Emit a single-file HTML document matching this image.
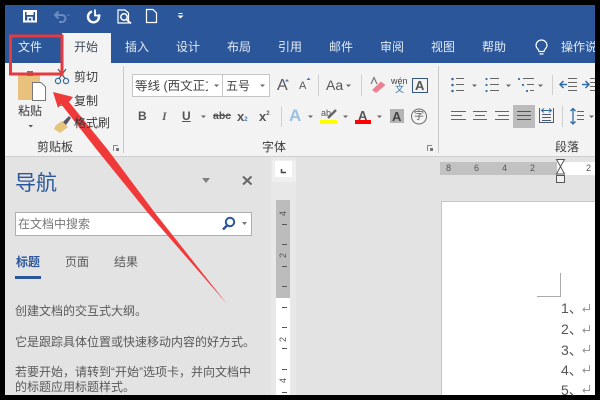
<!DOCTYPE html>
<html><head><meta charset="utf-8"><style>
html,body{margin:0;padding:0;background:#000}
#p{position:relative;width:600px;height:400px;overflow:hidden;background:#000;font-family:"Liberation Sans","Noto Sans CJK SC",sans-serif}
#p div,#p span.t{position:absolute;white-space:nowrap}
.t{line-height:1;color:#444}
.w{color:#e4ebf5;font-size:12px}
.k{color:#3a3a3a;font-size:12px}
.g{color:#5a5a5a;font-size:12px}
</style></head><body><div id="p">
<div style="left:5px;top:5px;width:590px;height:390px;background:#e3e3e3"></div>
<div style="left:271px;top:157px;width:25px;height:238px;background:#e8e8e8"></div>
<div style="left:5px;top:5px;width:590px;height:58px;background:#2b579a"></div>
<div style="left:5px;top:63px;width:590px;height:93px;background:#f3f3f3"></div>
<div style="left:5px;top:156px;width:590px;height:1px;background:#cfcfcf"></div>
<div style="left:62px;top:33px;width:49px;height:30px;background:#f3f3f3"></div>

<svg style="position:absolute;left:0;top:0" width="600" height="400">
<!-- quick access -->
<g fill="none" stroke="#fff">
<path d="M24 11H36V21.500H24Z" stroke-width="2"/><path d="M27 11H33V14.500H27Z" fill="#fff" stroke-width="1"/><path d="M28 21V17.500H32V21" stroke-width="1.500"/>
<path d="M56 15H62A3.500 3.500 0 0 1 62 22H59M58.500 11.500L55 15L58.500 18.500" stroke="#6a8cc0" stroke-width="2"/>
<path d="M67 15H70" stroke="#5f80b5"/>
<path d="M92 11.500A5.500 5.500 0 1 0 98.500 14.500" stroke-width="2.400"/><path d="M95 9.500V15.500H100.500" stroke-width="1.800"/>
<path d="M118 10H125L128.500 13V23H118Z" stroke-width="1.200"/><circle cx="124" cy="17" r="3.200" stroke-width="1.500"/><path d="M126.500 19.500L131 23.500" stroke-width="1.800"/>
<path d="M146.500 9.500H153L156.500 13V22.500H146.500Z" stroke-width="1.200"/>
<path d="M178.500 13.500H182.500" stroke-width="1"/>
</g>
<path d="M177.500 15.500H183.500L180.500 18.500Z" fill="#fff"/>
<g fill="none" stroke="#fff" stroke-width="1.200"><path d="M539 51.500C539 49 536 48.500 536 45.500A5.500 5.500 0 0 1 547 45.500C547 48.500 544 49 544 51.500ZM539.500 54H543.500"/></g>

<!-- clipboard group -->
<rect x="18" y="74" width="22" height="26" fill="#e8c27d"/><rect x="27" y="71" width="6" height="5" fill="#777"/>
<path d="M32.500 82.500H41L45.500 87V100.500H32.500Z" fill="#fff" stroke="#777"/>
<path d="M28.500 125H33L30.700 127.500Z" fill="#555"/>
<g fill="none" stroke="#2f6ea5" stroke-width="1.200"><circle cx="58" cy="81" r="2.600"/><circle cx="66" cy="81" r="2.600"/></g>
<path d="M59 78.500L66 69M65 78.500L58 69" stroke="#555" stroke-width="1.200"/>
<rect x="60.500" y="96.500" width="8" height="9" fill="#fff" stroke="#777"/>
<path d="M56 125L62 121 68 127 60 133 54 129Z" fill="#e5c47d"/><path d="M63 122L69 116 71 118 66 125Z" fill="#556"/>
<path d="M123.500 66V153M438.500 66V153" stroke="#c8c8c8"/>
<path d="M113.500 151V145.500H118M427.500 151V145.500H432" stroke="#888" fill="none"/><path d="M116 148H119V151H116ZM430 148H433V151H430Z" fill="#777"/>

<!-- font group -->
<rect x="132.500" y="74.500" width="90" height="22" fill="#fff" stroke="#c6c6c6"/>
<rect x="222.500" y="74.500" width="47" height="22" fill="#fff" stroke="#c6c6c6"/>
<path d="M214 84.500H219L216.500 87ZM260 84.500H265L262.500 87ZM346 84.500H351L348.500 87ZM472 84.500H477L474.500 87ZM506 84.500H511L508.500 87ZM538 84.500H543L540.500 87ZM201 115.500H206L203.500 118ZM308 115.500H313L310.500 118ZM343 115.500H348L345.500 118ZM377 115.500H382L379.500 118ZM589 115.500H594L591.500 118Z" fill="#666"/>
<path d="M285 81.500L287 79 289 81.500ZM306.500 80L308.500 77.500 310.500 80Z" fill="#4a78b0"/>
<path d="M281.500 107V127M318.500 75V96M361.500 75V96M552.500 75V95M562.500 106V127" stroke="#d0d0d0"/>
<path d="M222.500 0" />
<rect x="412.500" y="78.500" width="15" height="14" fill="none" stroke="#34557f"/>
<path d="M372 90L381 81.500 385.500 85 376 93Z" fill="#ee7f90"/><path d="M371 84L374 77.500 377 84" stroke="#777" stroke-width="1.200" fill="none"/>
<rect x="320" y="120" width="17" height="4" fill="#ff0"/><rect x="355" y="120" width="16" height="4" fill="#f00"/>
<path d="M328 118L336 110" stroke="#666" stroke-width="2.500"/>
<rect x="390" y="109" width="14" height="14" fill="#b4b4b4"/>
<circle cx="419" cy="116.500" r="7.500" fill="none" stroke="#666"/>

<!-- paragraph group row 1 -->
<g fill="#3a6ea5"><circle cx="452.500" cy="79" r="1.300"/><circle cx="452.500" cy="85" r="1.300"/><circle cx="452.500" cy="91" r="1.300"/><circle cx="486.500" cy="79" r="1.100"/><circle cx="486.500" cy="85" r="1.100"/><circle cx="486.500" cy="91" r="1.100"/><circle cx="519" cy="79" r="1.100"/><circle cx="523" cy="85" r="1.100"/><circle cx="527" cy="91" r="1.100"/></g>
<g stroke="#666" fill="none">
<path d="M456 78.500H464M456 84.500H464M456 90.500H464"/>
<path d="M490 78.500H499M490 84.500H499M490 90.500H499"/>
<path d="M523 78.500H534M527 84.500H534M530 90.500H534"/>
<path d="M568 78.500H577M568 82.500H577M568 86.500H577M568 90.500H577"/>
<path d="M590 78.500H595M590 82.500H595M590 86.500H595M590 90.500H595"/>
</g>
<path d="M560 84.500H567M563.500 81L560 84.500 563.500 88" stroke="#2f6ea5" stroke-width="1.500" fill="none"/>
<path d="M582 84.500H589M585.500 81L589 84.500 585.500 88" stroke="#2f6ea5" stroke-width="1.500" fill="none"/>
<!-- row 2 -->
<rect x="513" y="105" width="22" height="23" fill="#bcbcbc"/>
<g stroke="#666" fill="none">
<path d="M451 111.500H466M451 115.500H462M451 119.500H466"/>
<path d="M473 111.500H487M475 115.500H485M473 119.500H487"/>
<path d="M495 111.500H509M498 115.500H509M495 119.500H509"/>
<path d="M517 111.500H531M517 115.500H531M517 119.500H531" stroke="#555"/>
<path d="M539.500 108V122.500H553.500V108M542 114.500H551M542 117.500H551M542 120.500H551" stroke="#4a5a70"/>
<path d="M542 110.500H551M544 108.500L541.500 110.500 544 112.500M549 108.500L551.500 110.500 549 112.500" stroke="#2f6ea5"/>
<path d="M577 111.500H584M577 115.500H584M577 119.500H584"/>
</g>
<path d="M573 108.500V124M570.500 111L573 108.500 575.500 111M570.500 121.500L573 124 575.500 121.500" stroke="#2f6ea5" stroke-width="1.300" fill="none"/>

<!-- nav pane -->
<path d="M202 178H210L206 183Z" fill="#808080"/>
<path d="M243 176.500L251.500 184.500M251.500 176.500L243 184.500" stroke="#666" stroke-width="2"/>
<rect x="15.500" y="212.500" width="236" height="23" fill="#fff" stroke="#aeaeae"/>
<circle cx="230" cy="222" r="4.200" fill="none" stroke="#2b579a" stroke-width="2"/><path d="M227 225.500L223 229.500" stroke="#2b579a" stroke-width="2.500"/>
<path d="M242 222H247L244.500 225Z" fill="#777"/>
<rect x="15" y="276" width="26" height="3" fill="#2b579a"/>

<!-- rulers -->
<rect x="272" y="160" width="24" height="22" fill="#efefef"/>
<rect x="275" y="161" width="17" height="16" fill="#fff"/>
<path d="M281.500 169V172.500H286" stroke="#444" stroke-width="1.500" fill="none"/>
<rect x="276" y="200" width="14" height="198" fill="#fff"/>
<rect x="276" y="200" width="14" height="98" fill="#bcbcbc"/>
<path d="M282 224.500H287M282 244.500H287M282 266.500H287M282 286.500H287M282 307.500H287M282 327.500H287M282 348.500H287M282 369.500H287M282 392.500H287" stroke="#555" stroke-width="1"/>

<rect x="440" y="162" width="155" height="13" fill="#fff"/>
<rect x="440" y="162" width="117" height="13" fill="#c2c2c2"/>
<path d="M556.500 159.500H564.500L560.500 166.500 564.500 174H556.500L560.500 166.500Z" fill="#fff" stroke="#555"/>
<rect x="556.500" y="175.500" width="8" height="7" fill="#f1f1f1" stroke="#555"/>
<rect x="441.500" y="201.500" width="160" height="200" fill="#fff" stroke="#c6c6c6"/>
<path d="M560.500 273V296.500H537" fill="none" stroke="#aaa"/>
<g fill="none" stroke="#999"><path d="M589.500 304V309.500H583M585 307.500L583 309.500 585 311.500"/><path d="M589.500 325V330.500H583M585 328.500L583 330.500 585 332.500"/><path d="M589.500 345V350.500H583M585 348.500L583 350.500 585 352.500"/><path d="M589.500 365V370.500H583M585 368.500L583 370.500 585 372.500"/><path d="M589.500 385V390.500H583M585 388.500L583 390.500 585 392.500"/></g>

<!-- annotation -->
<path d="M53 92L73 97 69 102 108 150 155 213 227 304 148 213 97 150 61 104 58 108Z" fill="#f03a3a"/>
<rect x="10.500" y="36" width="51.500" height="38" fill="none" stroke="#e63a3f" stroke-width="3"/>
<rect x="0" y="0" width="600" height="5" fill="#000"/>
<rect x="0" y="395" width="600" height="5" fill="#000"/>
<rect x="0" y="0" width="5" height="400" fill="#000"/>
<rect x="595" y="0" width="5" height="400" fill="#000"/>
</svg>

<span class="t w" style="left:18px;top:41px">文件</span>
<span class="t" style="left:74px;top:41px;font-size:12px;color:#3f4a5c">开始</span>
<span class="t w" style="left:125px;top:41px">插入</span>
<span class="t w" style="left:176px;top:41px">设计</span>
<span class="t w" style="left:227px;top:41px">布局</span>
<span class="t w" style="left:278px;top:41px">引用</span>
<span class="t w" style="left:329px;top:41px">邮件</span>
<span class="t w" style="left:380px;top:41px">审阅</span>
<span class="t w" style="left:431px;top:41px">视图</span>
<span class="t w" style="left:482px;top:41px">帮助</span>
<span class="t w" style="left:561px;top:41px;width:34px;overflow:hidden">操作说</span>

<span class="t k" style="left:18px;top:105px">粘贴</span>
<span class="t k" style="left:74px;top:71px">剪切</span>
<span class="t k" style="left:74px;top:95px">复制</span>
<span class="t k" style="left:74px;top:117px">格式刷</span>
<span class="t k" style="left:37px;top:141px">剪贴板</span>
<span class="t k" style="left:262px;top:141px">字体</span>
<span class="t k" style="left:555px;top:141px">段落</span>

<span class="t" style="left:135px;top:80px;width:73px;overflow:hidden;font-size:12.500px;color:#444">等线 (西文正文</span>
<span class="t" style="left:226px;top:80px;font-size:12px;color:#444">五号</span>
<span class="t" style="left:277px;top:78px;font-size:16px;color:#555">A</span>
<span class="t" style="left:299px;top:81px;font-size:11px;color:#555">A</span>
<span class="t" style="left:326px;top:78px;font-size:14px;color:#555">Aa</span>
<span class="t" style="left:391px;top:77px;font-size:9px;color:#444">wén</span>
<span class="t" style="left:395px;top:85px;font-size:9px;color:#2f6ea5">文</span>
<span class="t" style="left:415px;top:79px;font-size:13px;font-weight:bold;color:#555">A</span>
<span class="t" style="left:138px;top:110px;font-size:12px;font-weight:bold;color:#555">B</span>
<span class="t" style="left:162px;top:110px;font-size:12px;font-style:italic;font-family:'Liberation Serif',serif;font-weight:bold;color:#666">I</span>
<span class="t" style="left:182px;top:110px;font-size:12px;font-weight:bold;color:#555;text-decoration:underline">U</span>
<span class="t" style="left:213px;top:111px;font-size:10.500px;font-weight:bold;color:#555;text-decoration:line-through">abc</span>
<span class="t" style="left:237px;top:110px;font-size:13px;font-weight:bold;color:#555">x<span style="font-size:6px;color:#4a78b0">2</span></span>
<span class="t" style="left:259px;top:110px;font-size:13px;font-weight:bold;color:#555">x<span style="font-size:6px;position:relative;top:-6px">2</span></span>
<span class="t" style="left:289px;top:107px;font-size:17px;font-weight:bold;color:#9cc0e4">A</span>
<span class="t" style="left:321px;top:109px;font-size:9px;color:#555">ab</span>
<span class="t" style="left:358px;top:109px;font-size:13px;font-weight:bold;color:#555">A</span>
<span class="t" style="left:392px;top:110px;font-size:13px;font-weight:bold;color:#444">A</span>
<span class="t" style="left:414px;top:112px;font-size:10px;color:#555">字</span>

<span class="t" style="left:15px;top:173px;font-size:21px;color:#2b579a">导航</span>
<span class="t" style="left:18px;top:218px;font-size:12px;color:#777">在文档中搜索</span>
<span class="t" style="left:16px;top:256px;font-size:12px;font-weight:bold;color:#2b579a">标题</span>
<span class="t g" style="left:65px;top:256px">页面</span>
<span class="t g" style="left:114px;top:256px">结果</span>
<span class="t g" style="left:15px;top:305px">创建文档的交互式大纲。</span>
<span class="t g" style="left:15px;top:336px">它是跟踪具体位置或快速移动内容的好方式。</span>
<span class="t g" style="left:15px;top:366px">若要开始，请转到“开始”选项卡，并向文档中</span>
<span class="t g" style="left:15px;top:381px">的标题应用标题样式。</span>

<span class="t" style="left:281px;top:209px;font-size:9px;color:#555;transform:rotate(-90deg)">4</span>
<span class="t" style="left:281px;top:251px;font-size:9px;color:#555;transform:rotate(-90deg)">2</span>
<span class="t" style="left:281px;top:335px;font-size:9px;color:#555;transform:rotate(-90deg)">2</span>
<span class="t" style="left:281px;top:376px;font-size:9px;color:#555;transform:rotate(-90deg)">4</span>
<span class="t" style="left:446px;top:164px;font-size:9px;color:#555">8</span>
<span class="t" style="left:474px;top:164px;font-size:9px;color:#555">6</span>
<span class="t" style="left:502px;top:164px;font-size:9px;color:#555">4</span>
<span class="t" style="left:530px;top:164px;font-size:9px;color:#555">2</span>
<span class="t" style="left:586px;top:164px;font-size:9px;color:#555">2</span>
<span class="t" style="left:561px;top:301px;font-size:14px;color:#555">1、</span>
<span class="t" style="left:561px;top:322px;font-size:14px;color:#555">2、</span>
<span class="t" style="left:561px;top:343px;font-size:14px;color:#555">3、</span>
<span class="t" style="left:561px;top:363px;font-size:14px;color:#555">4、</span>
<span class="t" style="left:561px;top:383px;font-size:14px;color:#555">5、</span>
</div></body></html>
